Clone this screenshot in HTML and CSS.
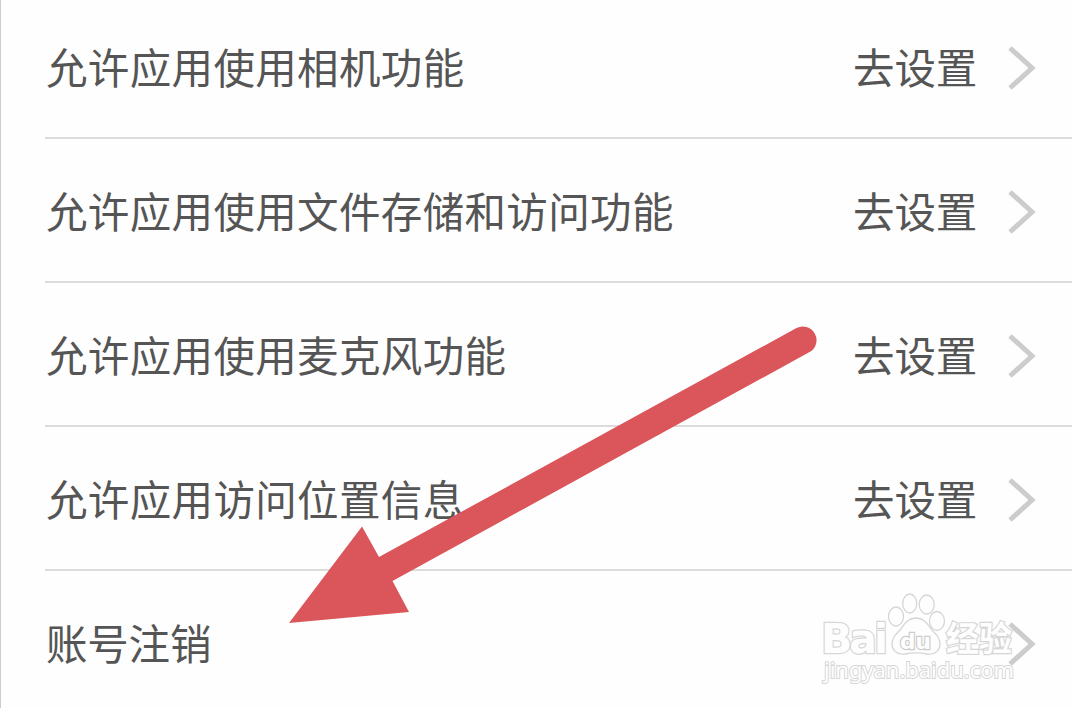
FILE: index.html
```html
<!DOCTYPE html>
<html lang="zh-CN">
<head>
    <meta charset="UTF-8">
    <meta name="viewport" content="width=device-width, initial-scale=1.0">
    <title>权限设置</title>
    <link rel="stylesheet" href="styles.css">
</head>
<body>
    <div class="page">
        <!-- 水印 -->
        <svg class="watermark" viewBox="0 0 200 96">
            <text class="brand" x="0" y="62.500">Bai</text>
            <ellipse cx="75" cy="26.500" rx="7.500" ry="9.500"/>
            <ellipse cx="88.700" cy="13.500" rx="7" ry="9.500"/>
            <ellipse cx="105.700" cy="14.500" rx="7.500" ry="9.500"/>
            <ellipse cx="116" cy="31" rx="7.500" ry="9.500"/>
            <path d="M95 28 C104 28 107 35 111 40 C115 44 119 48 119 54 C119 61 113 65 106 64 C99 62.500 91 62.500 84 64 C77 65 71 61 71 54 C71 48 75 44 79 40 C83 35 86 28 95 28 Z"/>
            <text class="du" x="79" y="58.500" textLength="31" lengthAdjust="spacingAndGlyphs">du</text>
            <text class="cn" x="125" y="61" textLength="66" lengthAdjust="spacingAndGlyphs">经验</text>
            <text class="site" x="3" y="88" textLength="190" lengthAdjust="spacingAndGlyphs">jingyan.baidu.com</text>
        </svg>

        <ul class="settings">
            <li class="row">
                <span class="label">允许应用使用相机功能</span>
                <span class="action">去设置</span>
                <svg class="chevron" viewBox="0 0 30 46"><path d="M3 3 L25 23 L3 43"/></svg>
            </li>
            <li class="row">
                <span class="label">允许应用使用文件存储和访问功能</span>
                <span class="action">去设置</span>
                <svg class="chevron" viewBox="0 0 30 46"><path d="M3 3 L25 23 L3 43"/></svg>
            </li>
            <li class="row">
                <span class="label">允许应用使用麦克风功能</span>
                <span class="action">去设置</span>
                <svg class="chevron" viewBox="0 0 30 46"><path d="M3 3 L25 23 L3 43"/></svg>
            </li>
            <li class="row">
                <span class="label">允许应用访问位置信息</span>
                <span class="action">去设置</span>
                <svg class="chevron" viewBox="0 0 30 46"><path d="M3 3 L25 23 L3 43"/></svg>
            </li>
            <li class="row">
                <span class="label">账号注销</span>
                <svg class="chevron" viewBox="0 0 30 46"><path d="M3 3 L25 23 L3 43"/></svg>
            </li>
        </ul>

        <!-- 指向「账号注销」的箭头 -->
        <svg class="arrow" viewBox="0 0 530 300">
            <path d="M0 298 L73 201.500 L90 232 L507.500 3 A13.700 13.700 0 0 1 521.500 26.500 L103.500 256 L120 287 Z"/>
        </svg>
    </div>
</body>
</html>
```
FILE: styles.css
```css
* {
    box-sizing: border-box;
}
body {
    margin: 0;
    background-color: #fefefe;
    color: #555;
    font-family: "Noto Sans CJK SC", sans-serif;
}
.page {
    position: relative;
    height: 708px;
    overflow: hidden;
    border-left: 1px solid #ccc;
}
.settings {
    position: relative;
    list-style: none;
    margin: -5px 0 0 44px;
    padding: 0;
}
.row {
    display: flex;
    align-items: center;
    height: 144px;
    padding: 3px 35px 0 1px;
    border-bottom: 2px solid #dcdcdc;
    font-size: 41.5px;
    line-height: 60px;
    letter-spacing: 0.35px;
}
.row:last-child {
    border-bottom-color: transparent;
    letter-spacing: -0.2px;
}
.label {
    flex: 1;
    padding-bottom: 3px;
}
.action {
    padding-bottom: 3px;
    margin-right: 30px;
    letter-spacing: -0.2px;
}
.chevron {
    width: 30px;
    height: 46px;
    fill: none;
    stroke: #ccc;
    stroke-width: 5;
}
.arrow {
    position: absolute;
    left: 288px;
    top: 325px;
    width: 530px;
    height: 300px;
    fill: #db565b;
}
.watermark {
    position: absolute;
    left: 820px;
    top: 590px;
    width: 200px;
    height: 96px;
    overflow: visible;
    fill: #fefefe;
    stroke: #d6d6d6;
    stroke-width: 1.3;
}
.watermark text {
    paint-order: stroke;
    stroke-width: 2.4;
}
.watermark .brand {
    font: bold 41px "DejaVu Sans", sans-serif;
    letter-spacing: -3px;
}
.watermark .du {
    font: bold 21px "DejaVu Sans", sans-serif;
    stroke: #ccc;
}
.watermark .cn {
    font: bold 34px "Noto Sans CJK SC", sans-serif;
}
.watermark .site {
    font: 22px "Noto Sans", sans-serif;
    stroke-width: 2;
}
```
